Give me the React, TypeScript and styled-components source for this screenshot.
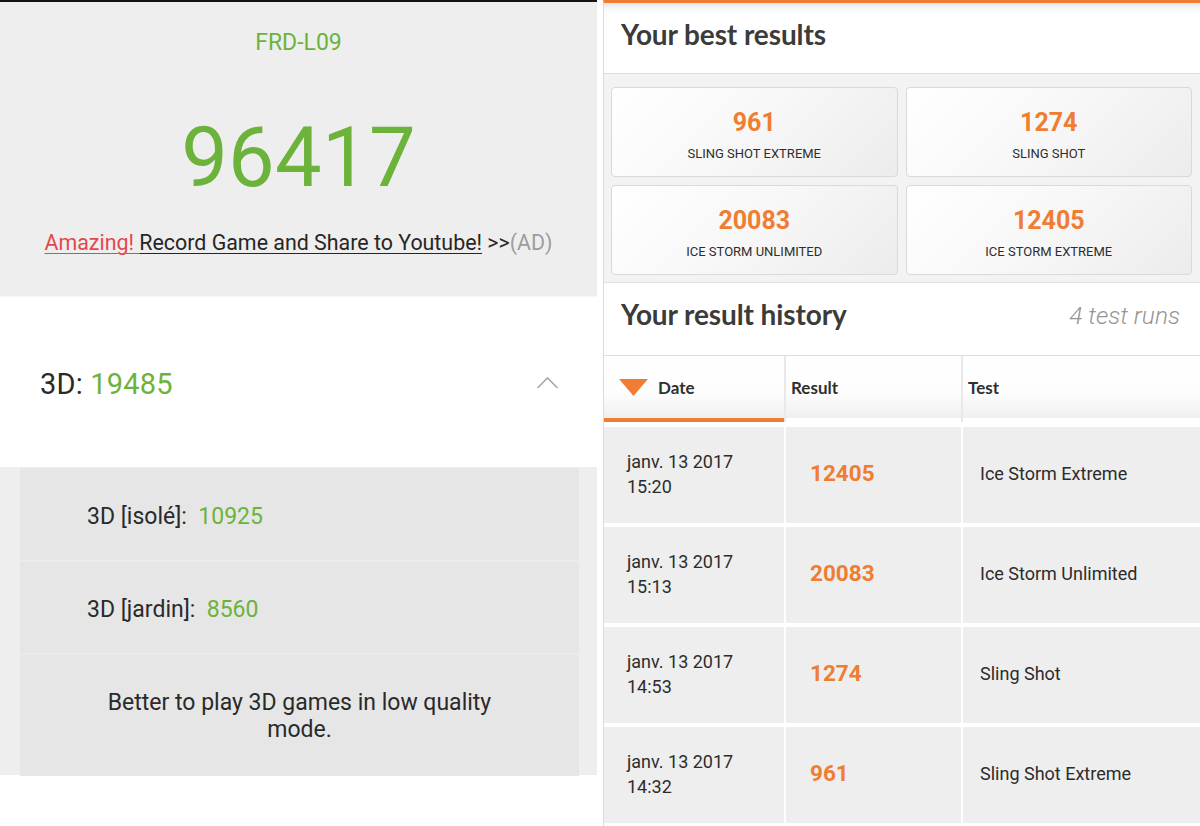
import React from 'react';
import styled, { createGlobalStyle } from 'styled-components';

const GREEN = '#6cb33c';
const ORANGE = '#ef7d32';
const INK = '#2a2a2a';

const Global = createGlobalStyle`
  html, body { margin: 0; padding: 0; }
  body {
    background: #fff;
    font-family: Roboto, "Noto Sans", Arial, sans-serif;
    -webkit-font-smoothing: antialiased;
  }
  #root { width: 1200px; height: 826px; overflow: hidden; }
`;

const Page = styled.div`
  display: flex;
  width: 1200px;
  height: 826px;
  background: #fff;
`;

/* ---------- left pane: overall benchmark score ---------- */

const ScorePane = styled.section`
  width: 597px;
  flex: none;
  display: flex;
  flex-direction: column;
  border-top: 2px solid #141414;
`;

const ScoreHead = styled.header`
  height: 295px;
  box-sizing: border-box;
  background: #efeeee;
  border-bottom: 1px solid #f7f7f7;
  display: flex;
  flex-direction: column;
  align-items: center;
  padding-top: 27px;
`;

const Model = styled.div`
  color: ${GREEN};
  font-size: 23px;
  line-height: 28px;
`;

const TotalScore = styled.div`
  margin-top: 56px;
  color: ${GREEN};
  font-size: 83px;
  line-height: 90px;
  letter-spacing: 0.3px;
`;

const AdLine = styled.div`
  margin-top: 27px;
  font-size: 21.4px;
  line-height: 26px;
  color: ${INK};
  white-space: nowrap;
`;

const AdLink = styled.span<{ $tone: 'red' | 'ink' }>`
  color: ${(p) => (p.$tone === 'red' ? '#e5474d' : '#262626')};
  text-decoration: underline;
  text-decoration-thickness: 1px;
  text-underline-offset: 3px;
`;

const AdTag = styled.span`
  color: #9d9d9d;
`;

const SummaryRow = styled.div`
  height: 170px;
  display: flex;
  align-items: center;
  justify-content: space-between;
  padding: 0 38px 0 40px;
  background: #fff;
`;

const SummaryLabel = styled.div`
  font-size: 29px;
  line-height: 34px;
  color: ${INK};
  margin-top: 3px;
  letter-spacing: 0.2px;
`;

const Value = styled.span`
  color: ${GREEN};
`;

const DetailArea = styled.div`
  height: 308px;
  box-sizing: border-box;
  background: #efeeee;
  padding: 1px 18px 0 20px;
`;

const DetailList = styled.div`
  height: 100%;
  display: flex;
  flex-direction: column;
  gap: 2px;
  background: #ebebeb;
`;

const DetailRow = styled.div<{ $h: number; $center?: boolean }>`
  height: ${(p) => p.$h}px;
  flex: none;
  display: flex;
  align-items: center;
  justify-content: ${(p) => (p.$center ? 'center' : 'flex-start')};
  padding: ${(p) => (p.$center ? '0 70px' : '0 0 0 67px')};
  background: #e6e6e6;
  font-size: 23px;
  line-height: 27px;
  color: ${INK};
  text-align: ${(p) => (p.$center ? 'center' : 'left')};
`;

const Metric = styled.span`
  margin-top: 4px;
`;

const Note = styled.div`
  font-size: 23px;
  line-height: 27px;
  margin-top: 1px;
`;

const Chevron = () => (
  <svg width="23" height="13" viewBox="0 0 23 13" fill="none">
    <polyline points="1.5,12 11.5,2 21.5,12" stroke="#a9a9a9" strokeWidth="1.6" />
  </svg>
);

/* ---------- right pane: 3DMark results ---------- */

const ResultsPane = styled.section`
  width: 596px;
  margin-left: 6px;
  flex: none;
  display: flex;
  flex-direction: column;
  border-left: 1px solid #dadada;
  border-top: 3px solid ${ORANGE};
`;

const SectionHead = styled.header<{ $h: number; $shade?: boolean }>`
  height: ${(p) => p.$h}px;
  flex: none;
  display: flex;
  align-items: flex-start;
  justify-content: space-between;
  box-sizing: border-box;
  padding: 14px 20px 0 17px;
  border-bottom: 1px solid #dedede;
  background: ${(p) => (p.$shade ? 'linear-gradient(to bottom, #e4e4e4 0px, #f7f7f7 5px, #fff 12px)' : '#fff')};
`;

const SectionTitle = styled.h2`
  margin: 0;
  font-family: Lato, "Open Sans", Arial, sans-serif;
  font-weight: 700;
  font-size: 28px;
  line-height: 34px;
  color: #3b3b3b;
  letter-spacing: -0.1px;
`;

const RunCount = styled.span`
  font-family: Roboto, Arial, sans-serif;
  font-style: italic;
  font-weight: 300;
  font-size: 24.5px;
  line-height: 34px;
  margin-top: 2px;
  color: #959595;
`;

const BestGrid = styled.div`
  flex: none;
  display: grid;
  grid-template-columns: 1fr 1fr;
  grid-auto-rows: 90px;
  gap: 8px;
  padding: 13px 8px 7px 7px;
  background: #f3f3f3;
  border-bottom: 1px solid #e3e3e3;
`;

const BestCard = styled.div`
  display: flex;
  flex-direction: column;
  align-items: center;
  box-sizing: border-box;
  padding-top: 21px;
  border: 1px solid #d9d9d9;
  border-radius: 4px;
  background: linear-gradient(135deg, #ffffff 0%, #f8f8f8 45%, #ececec 100%);
`;

const BestScore = styled.div`
  font-weight: 700;
  font-size: 25px;
  line-height: 28px;
  color: ${ORANGE};
`;

const BestName = styled.div`
  margin-top: 9px;
  font-size: 13px;
  line-height: 16px;
  color: #2e2e2e;
`;

const HistoryHead = styled.div`
  flex: none;
  height: 66px;
  display: grid;
  grid-template-columns: 180px 175px 1fr;
  column-gap: 2px;
  background: #e9e9e9;
`;

const HeadCell = styled.div<{ $active?: boolean }>`
  display: flex;
  align-items: center;
  gap: 10px;
  box-sizing: border-box;
  padding: ${(p) => (p.$active ? '0 0 0 15px' : '0 0 0 5px')};
  border-bottom: 4px solid ${(p) => (p.$active ? ORANGE : 'transparent')};
  background: linear-gradient(to bottom, #ffffff 0%, #fdfdfd 60%, #efefef 100%);
  font-family: Lato, "Open Sans", Arial, sans-serif;
  font-weight: 700;
  font-size: 17px;
  color: #303030;
`;

const SortArrow = () => (
  <svg width="29" height="17" viewBox="0 0 29 17">
    <polygon points="0,0 29,0 14.5,17" fill={ORANGE} />
  </svg>
);

const HistoryBody = styled.div`
  margin-top: 5px;
  display: grid;
  grid-template-columns: 180px 175px 1fr;
  grid-auto-rows: 96px;
  column-gap: 2px;
  row-gap: 4px;
`;

const Cell = styled.div<{ $pad: number }>`
  display: flex;
  align-items: center;
  padding-left: ${(p) => p.$pad}px;
  background: #eeeeee;
  color: #2c2c2c;
`;

const DateText = styled.div`
  font-size: 18px;
  line-height: 25px;
  margin-top: -2px;
`;

const RunScore = styled.div`
  font-weight: 700;
  font-size: 22.5px;
  color: ${ORANGE};
  margin-top: -4px;
`;

const TestName = styled.div`
  font-size: 18px;
  margin-top: -3px;
`;

const best = [
  { score: '961', name: 'SLING SHOT EXTREME' },
  { score: '1274', name: 'SLING SHOT' },
  { score: '20083', name: 'ICE STORM UNLIMITED' },
  { score: '12405', name: 'ICE STORM EXTREME' },
];

const runs = [
  { day: 'janv. 13 2017', time: '15:20', score: '12405', test: 'Ice Storm Extreme' },
  { day: 'janv. 13 2017', time: '15:13', score: '20083', test: 'Ice Storm Unlimited' },
  { day: 'janv. 13 2017', time: '14:53', score: '1274', test: 'Sling Shot' },
  { day: 'janv. 13 2017', time: '14:32', score: '961', test: 'Sling Shot Extreme' },
];

export default function App() {
  return (
    <>
      <Global />
      <Page>
        <ScorePane>
          <ScoreHead>
            <Model>FRD-L09</Model>
            <TotalScore>96417</TotalScore>
            <AdLine>
              <AdLink $tone="red">Amazing! </AdLink>
              <AdLink $tone="ink">Record Game and Share to Youtube!</AdLink>
              {' >>'}
              <AdTag>(AD)</AdTag>
            </AdLine>
          </ScoreHead>
          <SummaryRow>
            <SummaryLabel>
              3D: <Value>19485</Value>
            </SummaryLabel>
            <Chevron />
          </SummaryRow>
          <DetailArea>
            <DetailList>
              <DetailRow $h={92}>
                <Metric>
                  3D [isolé]:&nbsp;&nbsp;<Value>10925</Value>
                </Metric>
              </DetailRow>
              <DetailRow $h={91}>
                <Metric>
                  3D [jardin]:&nbsp;&nbsp;<Value>8560</Value>
                </Metric>
              </DetailRow>
              <DetailRow $h={121} $center>
                <Note>Better to play 3D games in low quality mode.</Note>
              </DetailRow>
            </DetailList>
          </DetailArea>
        </ScorePane>

        <ResultsPane>
          <SectionHead $h={71} $shade>
            <SectionTitle>Your best results</SectionTitle>
          </SectionHead>
          <BestGrid>
            {best.map((b) => (
              <BestCard key={b.name}>
                <BestScore>{b.score}</BestScore>
                <BestName>{b.name}</BestName>
              </BestCard>
            ))}
          </BestGrid>
          <SectionHead $h={73}>
            <SectionTitle>Your result history</SectionTitle>
            <RunCount>4 test runs</RunCount>
          </SectionHead>
          <HistoryHead>
            <HeadCell $active>
              <SortArrow />
              Date
            </HeadCell>
            <HeadCell>Result</HeadCell>
            <HeadCell>Test</HeadCell>
          </HistoryHead>
          <HistoryBody>
            {runs.map((r) => (
              <React.Fragment key={r.time}>
                <Cell $pad={23}>
                  <DateText>
                    {r.day}
                    <br />
                    {r.time}
                  </DateText>
                </Cell>
                <Cell $pad={24}>
                  <RunScore>{r.score}</RunScore>
                </Cell>
                <Cell $pad={17}>
                  <TestName>{r.test}</TestName>
                </Cell>
              </React.Fragment>
            ))}
          </HistoryBody>
        </ResultsPane>
      </Page>
    </>
  );
}
